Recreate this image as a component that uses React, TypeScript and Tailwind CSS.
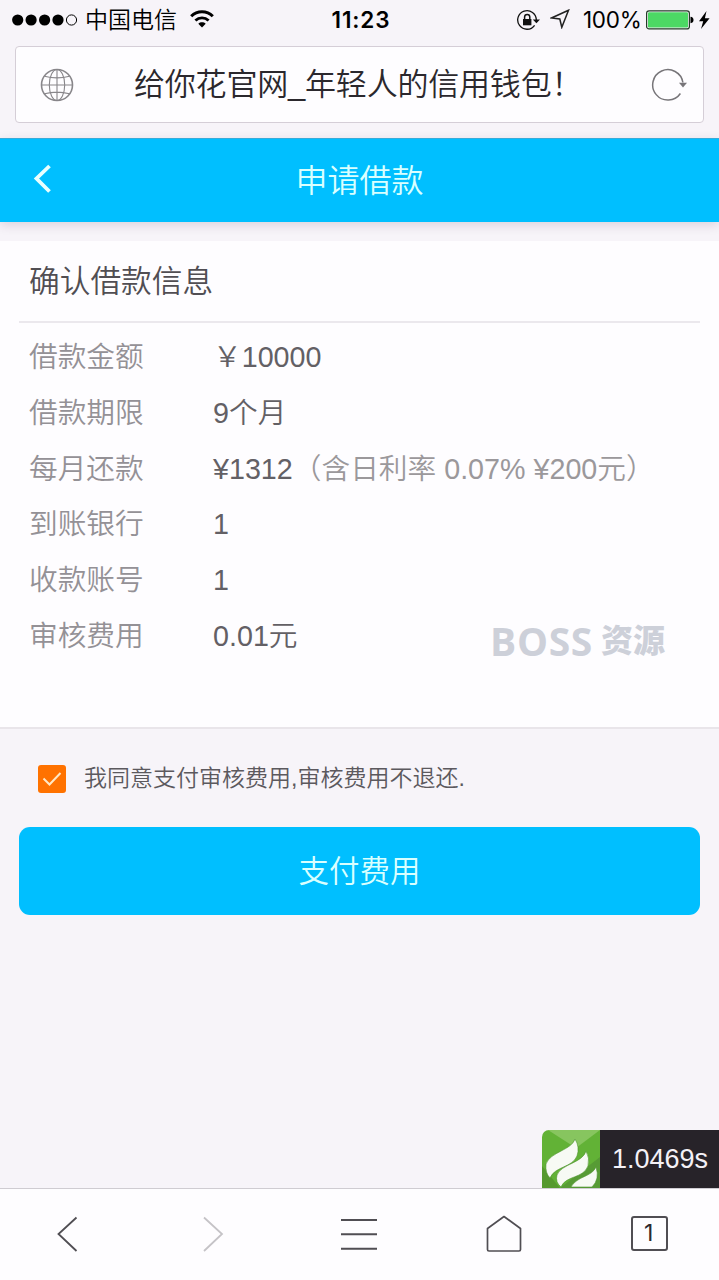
import type { ReactNode } from 'react';

const rows: { label: string; value: ReactNode }[] = [
  { label: '借款金额', value: '￥10000' },
  { label: '借款期限', value: '9个月' },
  {
    label: '每月还款',
    value: (
      <>
        ¥1312<span className="text-[#9b989b]">（含日利率 0.07% ¥200元）</span>
      </>
    ),
  },
  { label: '到账银行', value: '1' },
  { label: '收款账号', value: '1' },
  { label: '审核费用', value: '0.01元' },
];

function StatusBar() {
  return (
    <div className="grid h-[46px] shrink-0 grid-cols-[1fr_auto_1fr] items-start text-black">
      <div className="flex h-10 items-center pl-3">
        <svg className="h-4 w-[66px]" viewBox="0 0 66 16">
          <circle cx="5.7" cy="8" r="5.6" />
          <circle cx="19.1" cy="8" r="5.6" />
          <circle cx="32.6" cy="8" r="5.6" />
          <circle cx="46" cy="8" r="5.6" />
          <circle cx="59.5" cy="8" r="5.1" fill="none" stroke="#000" strokeWidth="1" />
        </svg>
        <span className="ml-[7px] pt-px text-[23px] font-[350] leading-[39px]">中国电信</span>
        <svg className="ml-[13px] mb-[2px] h-[18px] w-6" viewBox="0 0 24 18" fill="none" stroke="#000">
          <path d="M1.2 6.2C7.2.2 16.800.2 22.800 6.200" strokeWidth="3" />
          <path d="M5.400 10.600C9.200 7 14.800 7 18.600 10.600" strokeWidth="2.800" />
          <path d="M8.300 13.700C10.400 11.800 13.600 11.800 15.700 13.700L12 17.400Z" fill="#000" stroke="none" />
        </svg>
      </div>
      <div className="pl-[3px] text-[22.500px] font-semibold leading-10 tracking-[0.900px] font-['Inter','Liberation_Sans',sans-serif]">11:23</div>
      <div className="flex h-10 items-center justify-end pr-[9px]">
        <svg className="h-6 w-6" viewBox="0 0 24 24" fill="none" stroke="#111" strokeWidth="1.300">
          <path d="M18.600 17.300A9.300 9.300 0 1 1 20.300 12" />
          <path d="M16.800 11.500H24L20.400 15.300Z" fill="#111" stroke="none" />
          <rect x="7" y="11" width="8.400" height="6.300" fill="#111" stroke="none" />
          <path d="M8.600 11V9A2.600 2.600 0 0 1 13.800 9V11" strokeWidth="1.500" />
        </svg>
        <svg className="ml-[10px] mb-[2px] h-5 w-5" viewBox="0 0 20 20" fill="none" stroke="#222" strokeWidth="1.500">
          <path d="M18.500 1.300L1.500 9L9.800 10L11.800 18.300Z" />
        </svg>
        <span className="ml-[13px] w-[58px] whitespace-nowrap text-[22.500px] leading-10 font-['Inter','Liberation_Sans',sans-serif] tracking-[-0.300px]">100%</span>
        <svg className="ml-[5px] h-5 w-[48px]" viewBox="0 0 48 20">
          <rect x=".6" y=".9" width="42.800" height="18" rx="2.500" fill="#f7f4f8" stroke="#243c28" strokeWidth="1.200" />
          <rect x="2" y="2.300" width="40" height="15.200" rx="1.300" fill="#4cd964" />
          <path d="M44.500 6.800Q47.500 7.200 47.500 10T44.500 13.200Z" />
        </svg>
        <svg className="ml-1 h-[18px] w-[12px]" viewBox="0 0 12 18">
          <path d="M8.500 0L1 10.200H5.200L3 18L11.600 7.300H6.900Z" />
        </svg>
      </div>
    </div>
  );
}

function AddressBar() {
  return (
    <div className="mx-[15px] flex h-[77px] shrink-0 items-center rounded-[4px] border border-[#d5ced7] bg-[#fefdff]">
      <svg className="ml-6 h-[34px] w-[34px] shrink-0" viewBox="0 0 34 34" fill="none" stroke="#88868a" strokeWidth="1.100">
        <circle cx="17" cy="17" r="15.500" strokeWidth="1.600" />
        <ellipse cx="17" cy="17" rx="7.700" ry="15.500" />
        <path d="M17 1.500V32.500M1.500 17H32.500M4.500 8.300Q17 11.500 29.500 8.300M4.500 25.700Q17 22.500 29.500 25.700" />
      </svg>
      <div className="flex-1 whitespace-nowrap pl-[60px] text-[31px] font-[350] leading-[40px] tracking-[-0.200px] text-[#2b282d]">
        给你花官网_年轻人的信用钱包！
      </div>
      <svg className="mr-[16px] h-[34px] w-[36px] shrink-0" viewBox="0 0 36 34" fill="none" stroke="#777579" strokeWidth="1.500">
        <path d="M29.400 25.500A15.200 15.200 0 1 1 31.900 14.500" />
        <path d="M28 14.800H36L32 19.500Z" fill="#777579" stroke="none" />
      </svg>
    </div>
  );
}

function Toolbar() {
  return (
    <nav className="grid h-[92px] shrink-0 grid-cols-5 items-center border-t border-[#cfccd2] bg-[#fefdff] pb-[2px] text-[#504e53]">
      <svg className="ml-14 h-9 w-6" viewBox="0 0 24 36" fill="none" stroke="currentColor" strokeWidth="1.800">
        <path d="M20.500 1.500L2.500 18L20.500 35" />
      </svg>
      <svg className="ml-[57px] h-9 w-6 text-[#c5c3c7]" viewBox="0 0 24 36" fill="none" stroke="currentColor" strokeWidth="1.800">
        <path d="M3 1.500L21 18L3 35" />
      </svg>
      <svg className="ml-[53px] h-8 w-9" viewBox="0 0 36 32" stroke="currentColor" strokeWidth="1.900">
        <path d="M0 2H36M0 16.300H36M0 30.800H36" />
      </svg>
      <svg className="ml-[54px] h-10 w-[38px]" viewBox="0 0 38 40" fill="none" stroke="currentColor" strokeWidth="1.700">
        <path d="M2.500 14.500L19 2.500L35.500 14.500V35.500Q35.500 37 34 37H4Q2.500 37 2.500 35.500Z" strokeLinejoin="round" />
      </svg>
      <div className="ml-[56px] flex h-[35px] w-[37px] items-center justify-center rounded-[3px] border-2 border-[#504e53] pr-0.5 text-[23px] leading-none text-[#2b292d] font-['Inter','Liberation_Sans',sans-serif]">
        1
      </div>
    </nav>
  );
}

export default function App() {
  return (
    <div className="flex h-[1280px] w-[719px] flex-col overflow-hidden bg-[#f7f4f9] font-['Liberation_Sans','Noto_Sans_CJK_SC',sans-serif]">
      <StatusBar />
      <AddressBar />

      <header className="mt-[15px] grid h-[84px] shrink-0 grid-cols-[1fr_auto_1fr] items-center border-t border-[#38abd8] bg-[#00bfff] text-[#d9ffff] shadow-[0_3px_10px_rgba(80,40,80,0.16)]">
        <svg className="ml-[33px] mb-[3px] h-[30px] w-5" viewBox="0 0 20 30" fill="none" stroke="#e9ffff" strokeWidth="3.800">
          <path d="M16.500 2L3.500 14.500L16.500 27.500" />
        </svg>
        <h1 className="text-[32px] font-[350] leading-[40px]">申请借款</h1>
      </header>

      <section className="relative mt-[19px] h-[488px] shrink-0 border-b-2 border-[#e9e5ea] bg-[#fefdff] px-[19px]">
        <h2 className="h-[82px] border-b-2 border-[#ebe8ed] pl-[10px] text-[30.700px] font-[350] leading-[82px] text-[#514e53]">确认借款信息</h2>
        <dl className="pt-[7px] text-[28.700px]">
          {rows.map((row) => (
            <div key={row.label} className="flex h-[55.700px] items-center whitespace-nowrap pl-[10px] leading-[55px]">
              <dt className="w-[184px] font-[350] text-[#949196]">{row.label}</dt>
              <dd className="font-[350] text-[#636065]">{row.value}</dd>
            </div>
          ))}
        </dl>
        <div className="absolute left-[490px] top-[376px] flex items-center gap-2 whitespace-nowrap leading-[48px] text-[#cdd0d9]">
          <span className="text-[39px] font-bold tracking-[0.700px] font-['Open_Sans',sans-serif]">BOSS</span>
          <span className="text-[32px] font-black">资源</span>
        </div>
      </section>

      <main className="flex flex-1 flex-col px-[19px]">
        <label className="flex h-[98px] items-center pl-[19px]">
          <span className="mt-[2px] flex h-7 w-7 items-center justify-center rounded-[3px] bg-[#ff7200]">
            <svg className="h-[18px] w-5" viewBox="0 0 20 18" fill="none" stroke="#ffe8c4" strokeWidth="2">
              <path d="M1.500 8.500L7.500 14.500L18.500 3" />
            </svg>
          </span>
          <span className="ml-[18px] whitespace-nowrap text-[23px] font-[350] leading-[30px] text-[#5c595e]">我同意支付审核费用,审核费用不退还.</span>
        </label>
        <button className="h-[88px] w-full rounded-[11px] bg-[#00bfff] text-[30.500px] font-[350] leading-[88px] text-[#d9ffff]">支付费用</button>
        <div className="-mr-[19px] mt-auto flex h-[58px] self-end">
          <svg className="h-[58px] w-[58px] rounded-tl-[7px]" viewBox="0 0 58 58">
            <path d="M0 0H58V58H0Z" fill="#62b236" />
            <path d="M6 0H58L34 18Z" fill="#87c55f" />
            <path d="M0 36L18 58H0Z" fill="#55992e" />
            <path d="M18 58L58 27V58Z" fill="#579b35" />
            <g fill="#f7faf4" stroke="#4f9430" strokeWidth="0.600">
              <path d="M33 9C30 20 8 22 4 34Q3 43 8 48C13 36 30 38 35 26Q38 17 33 9Z" />
              <path d="M44 21C41 33 19 34 15 45Q13 52 19 57C24 45 41 49 46 36Q48 28 44 21Z" />
              <path d="M54 37C50 47 35 46 29 57H50Q58 49 54 37Z" />
            </g>
          </svg>
          <div className="w-[119px] bg-[#272329] pl-3 text-[27px] leading-[59px] text-[#f4f1f6]">1.0469s</div>
        </div>
      </main>
      <Toolbar />
    </div>
  );
}
